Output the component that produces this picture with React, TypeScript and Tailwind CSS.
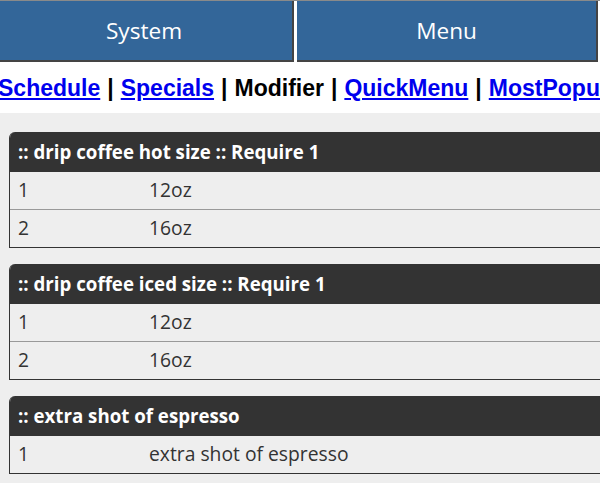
import React from "react";

const groups = [
  {
    title: ":: drip coffee hot size :: Require 1",
    items: [
      ["1", "12oz"],
      ["2", "16oz"],
    ],
  },
  {
    title: ":: drip coffee iced size :: Require 1",
    items: [
      ["1", "12oz"],
      ["2", "16oz"],
    ],
  },
  {
    title: ":: extra shot of espresso",
    items: [["1", "extra shot of espresso"]],
  },
];

const links = ["Schedule", "Specials", "Modifier", "QuickMenu", "MostPopular"];

export default function App() {
  return (
    <div className="w-[600px] h-[483px] overflow-hidden bg-[#eeeeee]">
      <div className="w-[680px]">
        {/* Top nav buttons */}
        <div className="flex bg-white border-t border-[#8a8a8a]">
          <button className="w-[294px] h-[61px] pr-[4px] bg-[#336699] text-white text-[22.6px] border-r-2 border-b-2 border-[#444]" style={{ fontFamily: '"Open Sans", sans-serif' }}>
            System
          </button>
          <div className="w-[3px]" />
          <button className="w-[301px] h-[61px] bg-[#336699] text-white text-[22.6px] border-r-2 border-b-2 border-[#444]" style={{ fontFamily: '"Open Sans", sans-serif' }}>
            Menu
          </button>
        </div>

        {/* Sub links */}
        <div className="bg-white h-[51px] pt-[9px] -ml-[2px] whitespace-nowrap font-bold text-[23px] text-black" style={{ fontFamily: '"Liberation Sans", Arial, sans-serif' }}>
          {links.map((l, i) => (
            <span key={l}>
              {l === "Modifier" ? (
                <span>{l}</span>
              ) : (
                <a href="#" className="text-[#0000ee] underline">{l}</a>
              )}
              {i < links.length - 1 && <span className="mx-[7px]">|</span>}
            </span>
          ))}
        </div>

        {/* Modifier groups */}
        <div className="pt-[19px] pl-[9px] flex flex-col gap-[16px]" style={{ fontFamily: '"Open Sans", sans-serif' }}>
          {groups.map((g) => (
            <div key={g.title} className="w-[640px] rounded-tl-[6px] overflow-hidden border-l border-[#333]">
              <div className="h-[40px] bg-[#333333] text-white font-bold text-[18.7px] pl-[8px] flex items-center">
                {g.title}
              </div>
              {g.items.map(([n, name], i) => (
                <div
                  key={n}
                  className={`h-[38px] flex items-center text-[19.3px] text-[#333] bg-[#eeeeee] border-b ${i < g.items.length - 1 ? "border-[#999]" : "border-[#333]"}`}
                >
                  <div className="w-[139px] pl-[8px]">{n}</div>
                  <div>{name}</div>
                </div>
              ))}
            </div>
          ))}
        </div>
      </div>
    </div>
  );
}
